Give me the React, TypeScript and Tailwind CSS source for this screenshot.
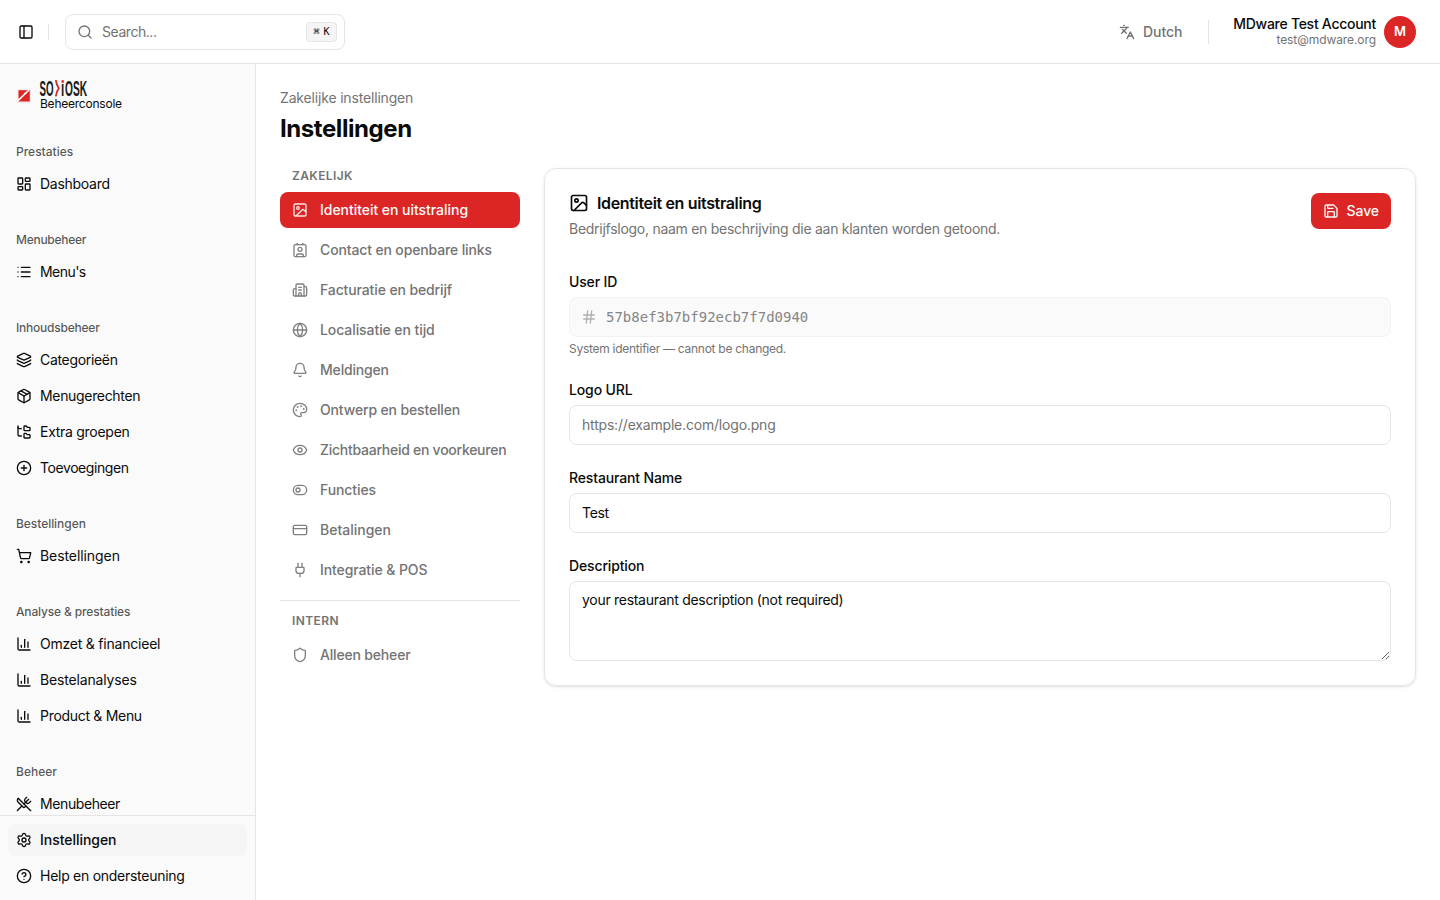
import type { ReactNode } from "react";
import {
  Bell,
  Building2,
  ChartColumn,
  CircleHelp,
  CirclePlus,
  Contact,
  CreditCard,
  Eye,
  FolderTree,
  Globe,
  Hash,
  Image,
  Languages,
  Layers,
  LayoutDashboard,
  List,
  Package,
  Palette,
  PanelLeft,
  Plug,
  Save,
  Search,
  Settings,
  Shield,
  ShoppingCart,
  ToggleLeft,
  UtensilsCrossed,
  type LucideIcon,
} from "lucide-react";

type NavItem = {
  label: string;
  icon: LucideIcon;
  active?: boolean;
  tracking?: string;
};

type NavGroup = {
  title: string;
  tracking?: string;
  items: NavItem[];
};

const sidebarGroups: NavGroup[] = [
  {
    title: "Prestaties",
    items: [{ label: "Dashboard", icon: LayoutDashboard, tracking: "tracking-[-0.28px]" }],
  },
  {
    title: "Menubeheer",
    tracking: "tracking-[-0.28px]",
    items: [{ label: "Menu's", icon: List, tracking: "tracking-[-0.55px]" }],
  },
  {
    title: "Inhoudsbeheer",
    tracking: "tracking-[-0.22px]",
    items: [
      { label: "Categorieën", icon: Layers, tracking: "tracking-[-0.32px]" },
      { label: "Menugerechten", icon: Package, tracking: "tracking-[-0.33px]" },
      { label: "Extra groepen", icon: FolderTree, tracking: "tracking-[-0.28px]" },
      { label: "Toevoegingen", icon: CirclePlus, tracking: "tracking-[-0.42px]" },
    ],
  },
  {
    title: "Bestellingen",
    tracking: "tracking-[-0.05px]",
    items: [{ label: "Bestellingen", icon: ShoppingCart, tracking: "tracking-[-0.08px]" }],
  },
  {
    title: "Analyse & prestaties",
    tracking: "tracking-[-0.15px]",
    items: [
      { label: "Omzet & financieel", icon: ChartColumn, tracking: "tracking-[-0.22px]" },
      { label: "Bestelanalyses", icon: ChartColumn, tracking: "tracking-[-0.16px]" },
      { label: "Product & Menu", icon: ChartColumn, tracking: "tracking-[-0.3px]" },
    ],
  },
  {
    title: "Beheer",
    items: [{ label: "Menubeheer", icon: UtensilsCrossed, tracking: "tracking-[-0.4px]" }],
  },
];

const footerItems: NavItem[] = [
  { label: "Instellingen", icon: Settings, active: true, tracking: "tracking-[-0.04px]" },
  { label: "Help en ondersteuning", icon: CircleHelp, tracking: "tracking-[-0.27px]" },
];

const businessItems: NavItem[] = [
  { label: "Identiteit en uitstraling", icon: Image, active: true, tracking: "tracking-[-0.04px]" },
  { label: "Contact en openbare links", icon: Contact, tracking: "tracking-[-0.14px]" },
  { label: "Facturatie en bedrijf", icon: Building2, tracking: "tracking-[-0.12px]" },
  { label: "Localisatie en tijd", icon: Globe, tracking: "tracking-[-0.08px]" },
  { label: "Meldingen", icon: Bell, tracking: "tracking-[-0.18px]" },
  { label: "Ontwerp en bestellen", icon: Palette, tracking: "tracking-[-0.15px]" },
  { label: "Zichtbaarheid en voorkeuren", icon: Eye, tracking: "tracking-[-0.26px]" },
  { label: "Functies", icon: ToggleLeft, tracking: "tracking-[-0.1px]" },
  { label: "Betalingen", icon: CreditCard },
  { label: "Integratie & POS", icon: Plug, tracking: "tracking-[-0.1px]" },
];

const internalItems: NavItem[] = [
  { label: "Alleen beheer", icon: Shield, tracking: "tracking-[-0.18px]" },
];

// Condensed brand lettering, drawn at half width
const Wordmark = () => (
  <svg width="48" height="18" viewBox="0 0 48 18" className="block overflow-visible">
    <g
      transform="scale(0.5 1)"
      fontFamily="Liberation Sans"
      fontWeight="700"
      fontSize="22.5"
      fill="#171717"
    >
      <text x="-1" y="16.2" textLength="28" lengthAdjust="spacingAndGlyphs">SO</text>
      <text x="42" y="16.2" textLength="6.5" lengthAdjust="spacingAndGlyphs">ı</text>
      <text x="50" y="16.2" textLength="44" lengthAdjust="spacingAndGlyphs">OSK</text>
    </g>
    <path d="M15.8.2Q16.6 5.5 18.8 8.2 16.6 11 15.8 16.4" fill="none" stroke="#dc2626" strokeWidth="1.8" />
    <path d="M21.5.2h2.3v2.6h-2.3z" fill="#dc2626" />
  </svg>
);

const Logo = () => (
  <div className="flex h-12 items-center gap-2 px-2">
    <svg width="16" height="16" viewBox="0 0 16 16" className="shrink-0">
      <rect x="1" y="1" width="14" height="14" rx="1.5" fill="#fdeaea" />
      <path d="M2.5 2.2h11.3v11.3H2.5z" fill="#dc2626" />
      <path d="M2 12.6 13 2M8 5.8l2.4-.6" stroke="#fff" strokeWidth="1.5" />
    </svg>
    <div className="-mt-0.5">
      <Wordmark />
      <div className="text-xs leading-3 tracking-[-0.23px]">Beheerconsole</div>
    </div>
  </div>
);

const SidebarItem = ({ label, icon: Icon, active, tracking = "" }: NavItem) => (
  <a
    className={`flex h-8 items-center gap-2 rounded-lg px-2 text-sm ${
      active ? "bg-[#f5f5f5] font-medium" : ""
    }`}
  >
    <Icon size={16} className="shrink-0" />
    <span className={tracking}>{label}</span>
  </a>
);

const SettingsItem = ({ label, icon: Icon, active, tracking = "" }: NavItem) => (
  <button
    className={`flex h-9 w-full items-center gap-3 rounded-lg px-3 text-sm font-medium whitespace-nowrap ${
      active ? "bg-[#dc2626] text-neutral-50" : "text-[#737373]"
    }`}
  >
    <Icon size={16} className="shrink-0 opacity-90" />
    <span className={tracking}>{label}</span>
  </button>
);

const Field = ({ label, children }: { label: string; children: ReactNode }) => (
  <div className="flex flex-col">
    <label className="mb-2 text-sm leading-none font-medium tracking-[-0.14px]">{label}</label>
    {children}
  </div>
);

const Header = () => (
  <header className="flex h-16 shrink-0 items-center justify-between border-b border-[#e5e5e5] px-4">
    <div className="flex items-center">
      <button className="flex h-7 w-5 items-center justify-center">
        <PanelLeft size={16} />
      </button>
      <div className="mr-4 ml-3 h-4 w-px bg-[#e5e5e5]" />
      <div className="flex h-9 w-[280px] items-center rounded-lg border border-[#e5e5e5] pr-[7px] pl-[11px] text-sm text-[#737373]">
        <Search size={16} />
        <span className="ml-[9px] flex-1 tracking-[-0.45px]">Search...</span>
        <kbd className="flex h-5 w-[31px] items-center justify-center gap-1 rounded border border-[#e5e5e5] bg-[#f5f5f5] pt-px font-['DejaVu_Sans_Mono',monospace] text-[10px] text-[#0a0a0a]">
          <span>⌘</span>
          <span>K</span>
        </kbd>
      </div>
    </div>

    <div className="flex items-center pr-2">
      <button className="flex items-center gap-2 text-sm font-medium text-[#737373]">
        <Languages size={16} />
        <span className="tracking-[-0.1px]">Dutch</span>
      </button>
      <div className="mr-6 ml-[26px] h-6 w-px bg-[#e5e5e5]" />
      <div className="text-right">
        <div className="-mt-px text-sm leading-[17px] font-medium tracking-[-0.27px]">
          MDware Test Account
        </div>
        <div className="text-xs leading-4 tracking-[-0.08px] text-[#737373]">test@mdware.org</div>
      </div>
      <div className="ml-2 flex size-8 items-center justify-center rounded-full bg-[#dc2626] text-[13px] font-semibold text-white">
        M
      </div>
    </div>
  </header>
);

const Sidebar = () => (
  <aside className="flex w-64 shrink-0 flex-col border-r border-[#e5e5e5] bg-[#fafafa]">
    <div className="p-2">
      <Logo />
    </div>
    <div className="flex min-h-0 flex-1 flex-col gap-2 overflow-hidden">
      {sidebarGroups.map(group => (
        <div key={group.title} className="shrink-0 p-2">
          <div className="flex h-8 items-center px-2 text-xs font-medium text-[#0a0a0a]/70">
            <span className={group.tracking}>{group.title}</span>
          </div>
          <div className="flex flex-col gap-1">
            {group.items.map(item => (
              <SidebarItem key={item.label} {...item} />
            ))}
          </div>
        </div>
      ))}
    </div>
    <div className="flex flex-col gap-1 border-t border-[#e5e5e5] p-2">
      {footerItems.map(item => (
        <SidebarItem key={item.label} {...item} />
      ))}
    </div>
  </aside>
);

const SettingsNav = () => (
  <nav className="w-60 shrink-0">
    <div className="mb-2 px-3 text-xs font-semibold tracking-[0.4px] text-[#737373]">ZAKELIJK</div>
    <div className="flex flex-col gap-1">
      {businessItems.map(item => (
        <SettingsItem key={item.label} {...item} />
      ))}
    </div>
    <div className="mt-3 border-t border-[#e5e5e5] pt-3">
      <div className="mb-2 px-3 text-xs font-semibold tracking-[0.4px] text-[#737373]">INTERN</div>
      {internalItems.map(item => (
        <SettingsItem key={item.label} {...item} />
      ))}
    </div>
  </nav>
);

const IdentityCard = () => (
  <section className="flex-1 rounded-xl border border-[#e5e5e5] p-6 shadow-sm">
    {/* Card header */}
    <div className="flex items-start justify-between">
      <div>
        <h2 className="flex h-5 items-center gap-2 text-base font-semibold tracking-[-0.35px]">
          <Image size={20} />
          <span>Identiteit en uitstraling</span>
        </h2>
        <p className="mt-1.5 text-sm tracking-[-0.27px] text-[#737373]">
          Bedrijfslogo, naam en beschrijving die aan klanten worden getoond.
        </p>
      </div>
      <button className="flex h-9 items-center gap-2 rounded-lg bg-[#dc2626] px-3 text-sm font-medium text-neutral-50">
        <Save size={16} />
        <span className="tracking-[-0.1px]">Save</span>
      </button>
    </div>

    {/* Form fields */}
    <div className="mt-9 flex flex-col gap-[26px]">
      <Field label="User ID">
        <div className="flex h-10 items-center rounded-lg border border-[#f2f2f2] bg-[#fafafa] px-[11px] text-[#858585]">
          <Hash size={16} className="mr-[9px] text-[#b0b0b0]" />
          <span className="font-['DejaVu_Sans_Mono',monospace] text-sm">57b8ef3b7bf92ecb7f7d0940</span>
        </div>
        <p className="mt-1 text-xs tracking-[-0.27px] text-[#737373]">
          System identifier — cannot be changed.
        </p>
      </Field>
      <Field label="Logo URL">
        <input
          className="h-10 rounded-lg border border-[#e5e5e5] px-3 pb-0.5 text-sm tracking-[-0.19px] placeholder:text-[#737373]"
          placeholder="https://example.com/logo.png"
        />
      </Field>
      <Field label="Restaurant Name">
        <input
          className="h-10 rounded-lg border border-[#e5e5e5] px-3 pb-0.5 text-sm tracking-[-0.3px]"
          defaultValue="Test"
        />
      </Field>
      <Field label="Description">
        <textarea
          className="block h-20 resize-y rounded-lg border border-[#e5e5e5] px-3 py-2 text-sm tracking-[-0.29px]"
          defaultValue="your restaurant description (not required)"
        />
      </Field>
    </div>
  </section>
);

const App = () => {
  return (
    <div className="flex h-screen flex-col overflow-hidden bg-white font-[Inter,sans-serif] text-[#0a0a0a] antialiased">
      <Header />
      <div className="flex min-h-0 flex-1">
        <Sidebar />
        <main className="flex-1 p-6">
          <p className="text-sm tracking-[-0.17px] text-[#737373]">Zakelijke instellingen</p>
          <h1 className="mt-[5px] text-2xl font-bold tracking-[-0.43px]">Instellingen</h1>
          <div className="mt-[23px] flex items-start gap-6">
            <SettingsNav />
            <IdentityCard />
          </div>
        </main>
      </div>
    </div>
  );
};

export default App;
